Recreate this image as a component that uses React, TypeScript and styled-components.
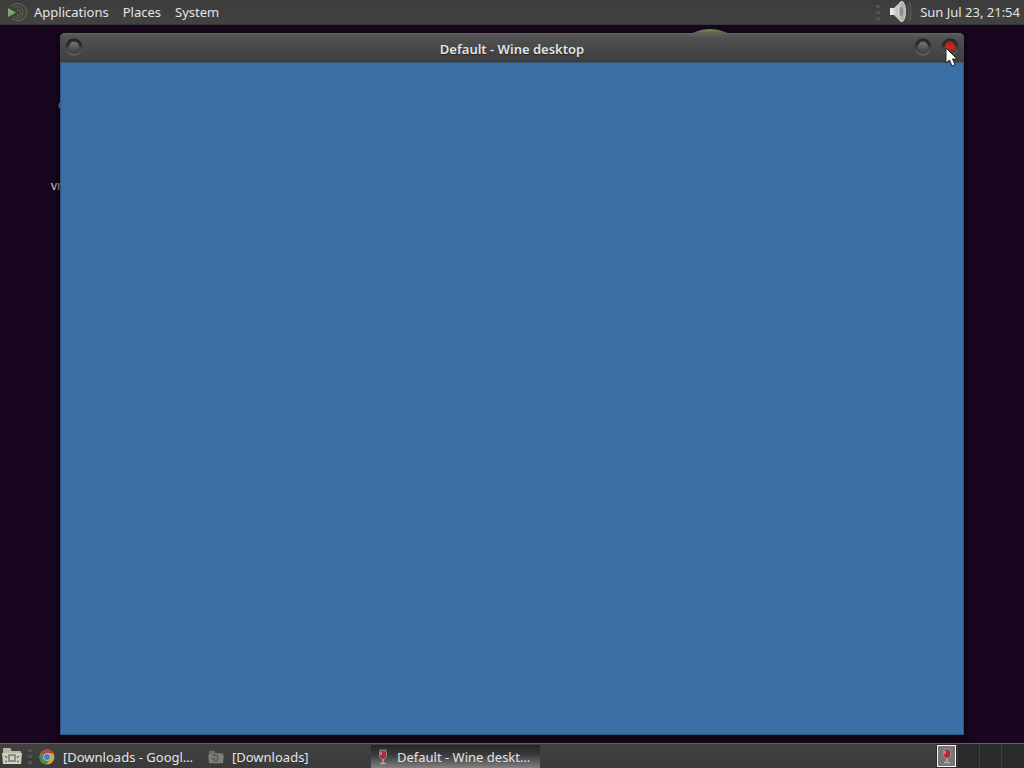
import React from "react";
import styled, { createGlobalStyle, css } from "styled-components";

const GlobalStyle = createGlobalStyle`
  *, *::before, *::after { box-sizing: border-box; }
  body {
    margin: 0;
    background: #1b0620;
    font-family: "Noto Sans", sans-serif;
    font-size: 13px;
    line-height: 20px;
    color: #e4e4e4;
  }
  button {
    font: inherit;
    color: inherit;
    background: none;
    border: 0;
    padding: 0;
    margin: 0;
  }
  svg { display: block; flex: none; }
`;

const Screen = styled.div`
  min-height: 100vh;
  display: flex;
  flex-direction: column;
`;

const TopPanel = styled.header`
  height: 25px;
  display: flex;
  align-items: center;
  justify-content: space-between;
  padding: 0 4px 0 8px;
  background: linear-gradient(#3c3c3c, #424242);
  border-bottom: 1px solid #363636;
`;

const MenuBar = styled.nav`
  display: flex;
  align-items: center;
  gap: 14px;
`;

const MenuButton = styled.button`
  display: flex;
  align-items: center;
  gap: 7px;
`;

const Tray = styled.div`
  display: flex;
  align-items: center;
  gap: 8px;
`;

const Desktop = styled.main`
  position: relative;
  flex: 1;
  overflow: hidden;
`;

const Backdrop = styled.svg`
  position: absolute;
  top: 4px;
  left: 670px;
`;

const IconLabel = styled.span<{ $x: number; $y: number }>`
  position: absolute;
  left: ${(p) => p.$x}px;
  top: ${(p) => p.$y}px;
  font-size: 12px;
`;

const Window = styled.section`
  position: absolute;
  inset: 8px 60px;
  display: flex;
  flex-direction: column;
  border: 1px solid #2f567d;
  border-top: 0;
  border-radius: 5px 5px 0 0;
  box-shadow: 0 2px 9px 2px #0a030cdd;
`;

const TitleBar = styled.div`
  height: 30px;
  margin: 0 -1px;
  padding: 0 5px;
  display: grid;
  grid-template-columns: 48px 1fr 48px;
  background: linear-gradient(#5c5c5c, #505050 4px, #3e3e3e);
  border-top: 1px solid #636363;
  border-bottom: 1px solid #35526e;
  border-radius: 5px 5px 0 0;
`;

const Title = styled.h1`
  margin: 0;
  padding-top: 5px;
  text-align: center;
  font-size: 13px;
  line-height: 20px;
  font-weight: 600;
  text-shadow: 0 1px 1px #222;
`;

const WindowButtons = styled.div<{ $end?: boolean }>`
  display: flex;
  justify-content: ${(p) => (p.$end ? "flex-end" : "flex-start")};
  padding-top: 4px;
  gap: 9px;
`;

const WindowButton = styled.button`
  width: 18px;
  height: 18px;
`;

const Client = styled.div`
  flex: 1;
  background: #3b6ea5;
`;

const BottomPanel = styled.footer`
  height: 25px;
  display: flex;
  background: linear-gradient(#414141, #3a3a3a);
  border-top: 1px solid #615d62;
`;

const ShowDesktop = styled.button`
  width: 28px;
  padding-left: 2px;
`;

const GripBox = styled.div`
  width: 5px;
  display: flex;
  align-items: center;
`;

const TaskList = styled.div`
  flex: 1;
  min-width: 0;
  display: flex;
`;

const Task = styled.button<{ $active?: boolean }>`
  width: 169px;
  height: 23px;
  margin-top: 1px;
  padding: 0 6px;
  display: flex;
  align-items: center;
  gap: 8px;
  white-space: nowrap;
  ${(p) =>
    p.$active &&
    css`
      background: linear-gradient(#242424, #3c3c3c 45%, #818181);
    `}
`;

const TaskName = styled.span`
  overflow: hidden;
  text-overflow: ellipsis;
`;

const Workspaces = styled.div`
  display: flex;
  background: #292b2b;
`;

const Workspace = styled.button`
  width: 22px;
  border-right: 1px solid #3a4041;
  display: flex;
  align-items: center;
  justify-content: center;
  &:last-child { border-right: 0; }
`;

const MiniWindow = styled.span`
  width: 19px;
  height: 22px;
  display: flex;
  align-items: center;
  justify-content: center;
  background: #777;
  border: 1px solid #f4f4f4;
`;

const Pointer = styled.svg`
  position: absolute;
  top: 22px;
  right: 66px;
`;

function MateLogo() {
  return (
    <svg width="19" height="20" viewBox="0 0 19 20" fill="none" aria-hidden="true">
      <path d="M0 6v9l8-4.500z" fill="#80a569" />
      <path d="M3 4.500C6 1 12 .5 16 4.500s3 10-1 12.500-9 1.500-11-.5" stroke="#64794f" />
      <path d="M6 5.500c4-2.500 9 .5 9 5s-5 6.500-9 4" stroke="#5b7046" />
      <path d="M9 8c2-.5 3.500 1 3.500 2.500S11 13.500 9 13" stroke="#64794f" />
    </svg>
  );
}

function Grip() {
  return (
    <svg width="5" height="18" aria-hidden="true">
      {[1, 7, 13].map((y) => (
        <g key={y}>
          <rect y={y} width="4" height="4" fill="#535353" />
          <path d={`M0 ${y}h4`} stroke="#2f2f2f" />
        </g>
      ))}
    </svg>
  );
}

function Speaker() {
  return (
    <svg width="23" height="24" viewBox="0 0 23 24" aria-hidden="true">
      <defs>
        <linearGradient id="cone">
          <stop stopColor="#f2f2f2" />
          <stop offset="0.6" stopColor="#b9b9b7" />
          <stop offset="1" stopColor="#ecece9" />
        </linearGradient>
      </defs>
      <path d="M1 8h4l7-7c5 4 5 17 0 21L5 15H1z" fill="url(#cone)" />
      <ellipse cx="13" cy="11.500" rx="3.500" ry="10" fill="#b0b0ad" stroke="#d9d9d6" />
      <ellipse cx="12.500" cy="11.500" rx="1.500" ry="4.500" fill="#8b8b88" />
      <path d="M18 4c2 4 2 11 0 15M20.500 2c2 5 2 14 0 19" stroke="#626262" fill="none" />
    </svg>
  );
}

function RoundButton({ id, red }: { id: string; red?: boolean }) {
  return (
    <svg width="18" height="18" viewBox="0 0 18 18" aria-hidden="true">
      <defs>
        <linearGradient id={id + "rim"} x2="0" y2="1">
          <stop stopColor="#1d1d1d" />
          <stop offset="0.5" stopColor="#373737" />
          <stop offset="1" stopColor="#777" />
        </linearGradient>
        <linearGradient id={id + "face"} x2="0" y2="1">
          <stop stopColor={red ? "#b71b18" : "#777"} />
          <stop offset="0.6" stopColor={red ? "#dc201b" : "#555"} />
          <stop offset="1" stopColor={red ? "#861c1b" : "#454545"} />
        </linearGradient>
      </defs>
      <circle cx="9" cy="9" r="8.500" fill={`url(#${id}rim)`} />
      <circle cx="9" cy="9.500" r="7" fill="#454545" />
      <path d="M3 8a6 6 0 0 1 12 0" fill="none" stroke="#292929" strokeWidth="2" />
      <circle cx="9" cy="9" r="5" fill={`url(#${id}face)`} />
    </svg>
  );
}

function Folder({ light }: { light?: boolean }) {
  return (
    <svg width={light ? 20 : 16} height={light ? 18 : 14} viewBox="0 0 20 18" aria-hidden="true">
      <path d="M1 2q0-1 1-1h6l2 3h8q1 0 1 1v3H1z" fill={light ? "#b8b8a8" : "#6e6e6a"} />
      <path d="M0 6h20l-1 11H1z" fill={light ? "#d0d0c0" : "#80807b"} />
      <path
        d={light ? "M7 8h6v6H7zM3 9l2 2M17 9l-2 2M3 15l2-1M17 15l-2-1" : "M6 8c3-3 8 0 7 4s-6 3-6 1 3-3 4-1M4 10l4 4"}
        fill="none"
        stroke={light ? "#77776c" : "#565653"}
        strokeWidth="1.500"
      />
    </svg>
  );
}

function Chrome() {
  return (
    <svg width="16" height="16" viewBox="0 0 16 16" aria-hidden="true">
      <circle cx="8" cy="8" r="7.500" fill="#c6a83c" />
      <path d="M8 8L1.500 4.250A7.500 7.500 0 0 1 14.500 4.250H8z" fill="#b34a40" />
      <path d="M8 8L1.500 4.250A7.500 7.500 0 0 0 7.500 15.500L11 9.500z" fill="#4c8b52" />
      <circle cx="8" cy="8" r="3.800" fill="#c3cbd4" />
      <circle cx="8" cy="8" r="3" fill="#477fc0" />
    </svg>
  );
}

function WineGlass() {
  return (
    <svg width="12" height="16" viewBox="0 0 12 16" aria-hidden="true">
      <path d="M3 1h6l.5 5q0 4-3.500 4.500Q2.500 10 2.500 6z" fill="#7a4b51" stroke="#a6a0a2" strokeWidth=".8" />
      <path d="M3 4l6-1v4q-.5 2.500-3 2.500T3 7z" fill="#b52439" />
      <path d="M6 10v4M3 14.500h6" stroke="#aaa" strokeWidth="1.500" />
      <path d="M4 3v3" stroke="#dec2c6" />
    </svg>
  );
}

const tasks = [
  { name: "[Downloads - Google Chrome]", icon: <Chrome /> },
  { name: "[Downloads]", icon: <Folder /> },
  { name: "Default - Wine desktop", icon: <WineGlass />, active: true },
];

export default function App() {
  return (
    <>
      <GlobalStyle />
      <Screen>
        <TopPanel>
          <MenuBar aria-label="Main menu">
            <MenuButton>
              <MateLogo />
              Applications
            </MenuButton>
            <MenuButton>Places</MenuButton>
            <MenuButton>System</MenuButton>
          </MenuBar>
          <Tray>
            <Grip />
            <button aria-label="Volume">
              <Speaker />
            </button>
            <button>Sun Jul 23, 21:54</button>
          </Tray>
        </TopPanel>
        <Desktop>
          <Backdrop width="80" height="80" aria-hidden="true">
            <circle cx="40" cy="40" r="40" fill="#89ad68" />
          </Backdrop>
          <IconLabel $x={58} $y={70}>c</IconLabel>
          <IconLabel $x={51} $y={151}>vn</IconLabel>
          <Window>
            <TitleBar>
              <WindowButtons>
                <WindowButton aria-label="Window menu">
                  <RoundButton id="menu" />
                </WindowButton>
              </WindowButtons>
              <Title>Default - Wine desktop</Title>
              <WindowButtons $end>
                <WindowButton aria-label="Minimize">
                  <RoundButton id="minimize" />
                </WindowButton>
                <WindowButton aria-label="Close">
                  <RoundButton id="close" red />
                </WindowButton>
              </WindowButtons>
            </TitleBar>
            <Client />
          </Window>
          <Pointer width="13" height="21" viewBox="0 0 13 21" aria-hidden="true">
            <path d="M1 1v15l3.500-3 2.500 6 3-1.500-2.500-5.500H12z" fill="#fff" stroke="#222" />
          </Pointer>
        </Desktop>
        <BottomPanel>
          <ShowDesktop aria-label="Show desktop">
            <Folder light />
          </ShowDesktop>
          <GripBox>
            <Grip />
          </GripBox>
          <TaskList>
            {tasks.map((t) => (
              <Task key={t.name} $active={t.active}>
                {t.icon}
                <TaskName>{t.name}</TaskName>
              </Task>
            ))}
          </TaskList>
          <Workspaces>
            <Workspace aria-label="Workspace 1">
              <MiniWindow>
                <WineGlass />
              </MiniWindow>
            </Workspace>
            <Workspace aria-label="Workspace 2" />
            <Workspace aria-label="Workspace 3" />
            <Workspace aria-label="Workspace 4" />
          </Workspaces>
        </BottomPanel>
      </Screen>
    </>
  );
}
